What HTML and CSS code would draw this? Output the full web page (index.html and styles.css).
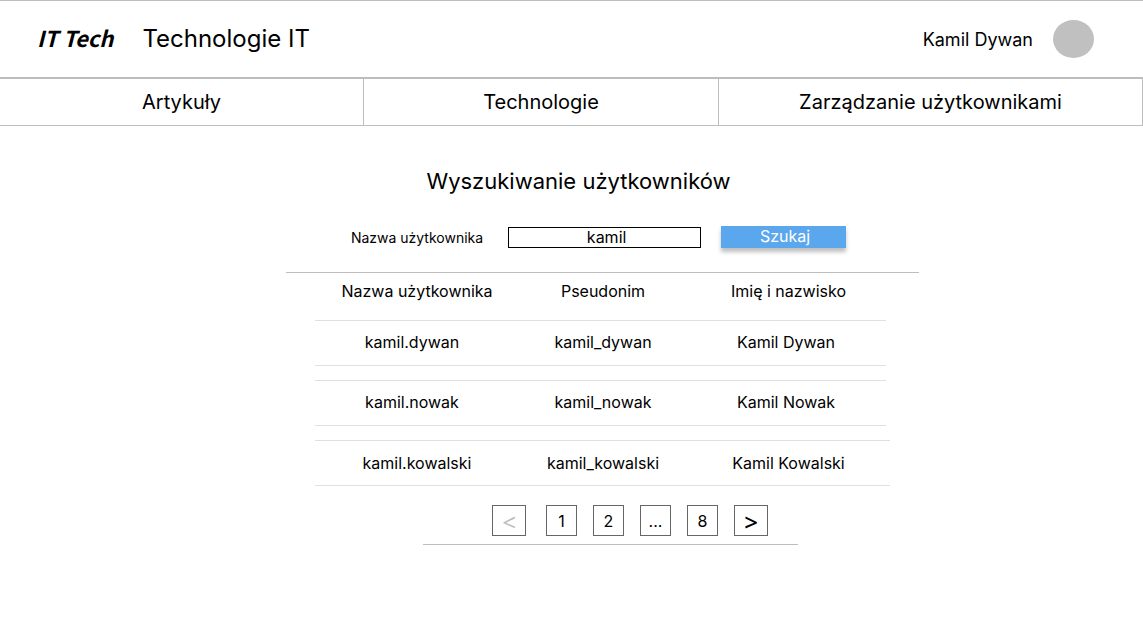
FILE: index.html
```html
<!DOCTYPE html>
<html lang="pl">
<head>
  <meta charset="utf-8">
  <meta name="viewport" content="width=device-width, initial-scale=1">
  <title>Technologie IT</title>
  <link rel="stylesheet" href="styles.css">
</head>
<body>
  <header class="topbar">
    <a class="logo" href="#">IT Tech</a>
    <span class="site-name">Technologie IT</span>
    <span class="user-name">Kamil Dywan</span>
    <span class="avatar"></span>
  </header>
  <nav class="tabs">
    <a class="tab" href="#">Artykuły</a>
    <a class="tab" href="#">Technologie</a>
    <a class="tab" href="#">Zarządzanie użytkownikami</a>
  </nav>
  <main class="content">
    <h1 class="title">Wyszukiwanie użytkowników</h1>
    <form class="search">
      <label class="search-label" for="username">Nazwa użytkownika</label>
      <input class="search-input" id="username" type="text" value="kamil">
      <button class="search-button" type="button">Szukaj</button>
    </form>
    <section class="results">
      <table class="users">
        <thead class="users-head">
          <tr class="row row-wide">
            <th class="cell">Nazwa użytkownika</th>
            <th class="cell">Pseudonim</th>
            <th class="cell">Imię i nazwisko</th>
          </tr>
        </thead>
        <tbody class="users-body">
          <tr class="row">
            <td class="cell">kamil.dywan</td>
            <td class="cell">kamil_dywan</td>
            <td class="cell">Kamil Dywan</td>
          </tr>
          <tr class="row">
            <td class="cell">kamil.nowak</td>
            <td class="cell">kamil_nowak</td>
            <td class="cell">Kamil Nowak</td>
          </tr>
          <tr class="row row-wide">
            <td class="cell">kamil.kowalski</td>
            <td class="cell">kamil_kowalski</td>
            <td class="cell">Kamil Kowalski</td>
          </tr>
        </tbody>
      </table>
      <div class="pagination">
        <button class="page page-prev" type="button" disabled>&lt;</button>
        <button class="page" type="button">1</button>
        <button class="page" type="button">2</button>
        <button class="page" type="button">...</button>
        <button class="page" type="button">8</button>
        <button class="page page-next" type="button">&gt;</button>
      </div>
    </section>
  </main>
</body>
</html>
```
FILE: styles.css
```css
* {
  box-sizing: border-box;
}

body {
  margin: 0;
  background: #fff;
  color: #000;
  font-family: Inter, "Liberation Sans", sans-serif;
  font-size: 16px;
}

a {
  color: inherit;
  text-decoration: none;
}

.topbar {
  display: flex;
  align-items: center;
  padding: 19px 49px 19px 37px;
  border-top: 1px solid #bdbdbd;
  border-bottom: 1px solid #bdbdbd;
}

.logo {
  padding-bottom: 4px;
  font-family: "Noto Sans CJK JP", "Noto Sans", sans-serif;
  font-size: 22px;
  line-height: 28px;
  font-weight: 700;
  font-style: italic;
}

.site-name {
  margin-left: 29px;
  font-size: 24px;
  line-height: 28px;
}

.user-name {
  margin-left: auto;
  font-size: 18px;
}

.avatar {
  width: 41px;
  height: 38px;
  margin-left: 20px;
  border-radius: 50%;
  background: #c0c0c0;
}

.tabs {
  display: grid;
  grid-template-columns: 364fr 355fr 424fr;
  border-top: 1px solid #bdbdbd;
  border-bottom: 1px solid #bdbdbd;
}

.tab {
  padding: 9px 0;
  border-right: 1px solid #bdbdbd;
  font-size: 20px;
  line-height: 28px;
  text-align: center;
}

.content {
  display: flex;
  flex-direction: column;
  align-items: center;
  padding: 41px 0 40px 62px;
}

.title {
  margin: 0 48px 0 0;
  font-size: 22px;
  line-height: 28px;
  font-weight: 400;
}

.search {
  display: flex;
  align-items: center;
  margin: 31px 8px 24px 0;
}

.search-label {
  margin-right: 25px;
  font-size: 14px;
}

.search-input {
  width: 193px;
  height: 21px;
  margin-right: 20px;
  padding: 0 0 0 4px;
  border: 1px solid #000;
  border-radius: 0;
  background: #fff;
  color: #000;
  font: inherit;
  text-align: center;
}

.search-button {
  width: 125px;
  height: 22px;
  padding: 0 0 2px 3px;
  border: 0;
  background: #5ba7ee;
  box-shadow: 0 4px 4px rgba(0, 0, 0, 0.25);
  color: #fff;
  font: inherit;
}

.results {
  display: flex;
  flex-direction: column;
  align-items: center;
  width: 100%;
  max-width: 633px;
  border-top: 1px solid #bdbdbd;
}

.users,
.users-head,
.users-body {
  display: block;
}

.users {
  width: 575px;
}

.users-body {
  display: grid;
  gap: 14px;
}

.row {
  display: grid;
  grid-template-columns: 194px 188px 178px;
  margin-right: 4px;
  padding: 9px 0 11px;
  border: solid #e0e0e0;
  border-width: 1px 0;
}

.row-wide {
  grid-template-columns: 204px 168px 203px;
  margin-right: 0;
  padding: 10px 0;
}

.users-head .row {
  padding: 6px 0 17px;
  border: 0;
}

.cell {
  padding: 0;
  font-size: 16px;
  line-height: 24px;
  font-weight: 400;
  text-align: center;
}

.pagination {
  display: flex;
  gap: 16px;
  margin-left: 16px;
  padding: 19px 30px 8px 69px;
  border-bottom: 1px solid #bdbdbd;
}

.page {
  width: 31px;
  height: 31px;
  padding: 0;
  border: 1px solid #666;
  background: #fff;
  color: #000;
  font: inherit;
}

.page-prev,
.page-next {
  width: 34px;
  padding-top: 2px;
  font-family: "Noto Sans", sans-serif;
  font-size: 24px;
  line-height: 28px;
}

.page-prev {
  margin-right: 4px;
  color: #bdbdbd;
}

.page-next {
  font-weight: 500;
}
```
